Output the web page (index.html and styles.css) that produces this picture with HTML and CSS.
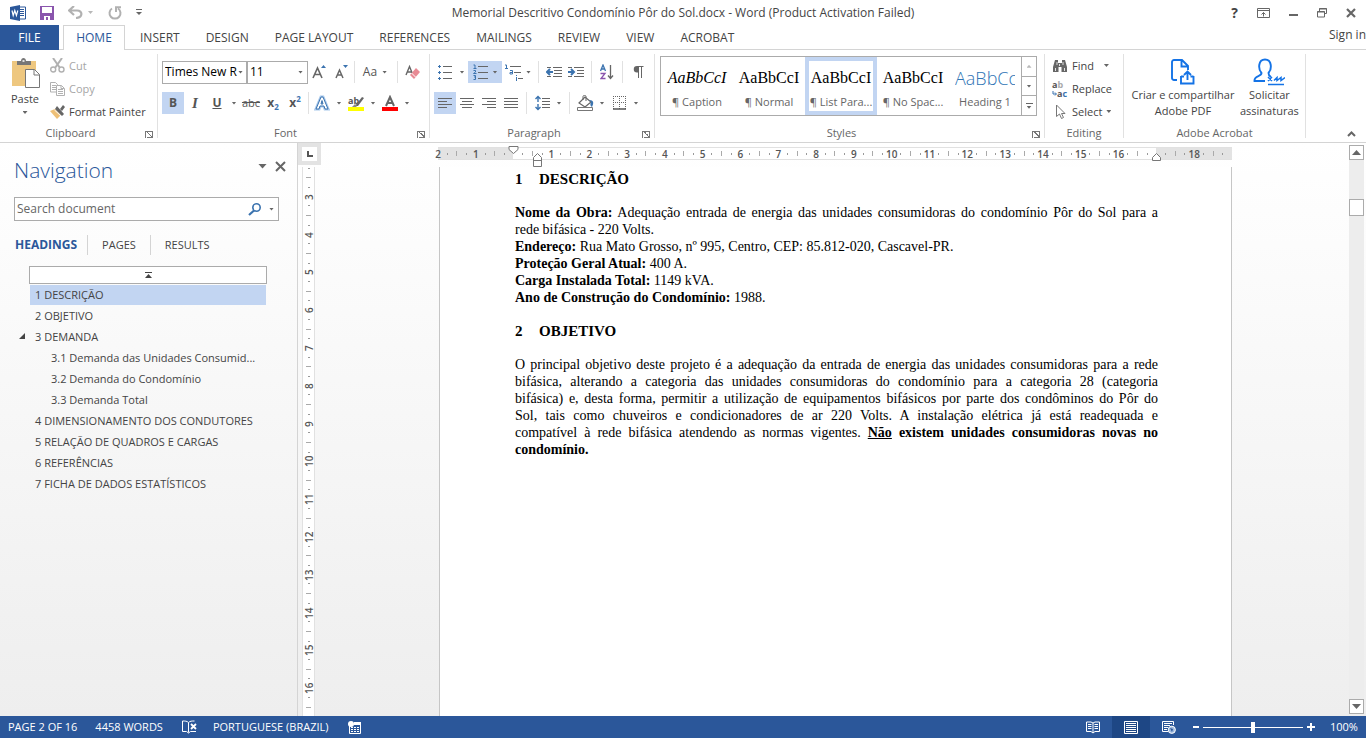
FILE: index.html
```html
<!DOCTYPE html>
<html lang="en">
<head>
<meta charset="utf-8">
<title>Memorial Descritivo Condomínio Pôr do Sol.docx - Word</title>
<link rel="stylesheet" href="styles.css">
</head>
<body>
<header class="titlebar">
  <div class="quick">
    <svg class="ico" width="16" height="16" viewBox="0 0 16 16"><path d="M9 2h6.500v12H9z" fill="#fff" stroke="#2b579a"/><path d="M10 4.500h4M10 6.500h4M10 8.500h4M10 10.500h4" stroke="#2b579a"/><path d="M0 2l10-2v16L0 14z" fill="#2b579a"/><path d="M2 5.500l1.200 5 1.600-5 1.600 5 1.400-5" fill="none" stroke="#fff" stroke-width="1.200"/></svg>
    <button aria-label="Save"><svg width="14" height="14" viewBox="0 0 14 14"><path d="M0 0h14v14H0z" fill="#8a55ad"/><path d="M2 1h10v6H2zM4 10h6v4H8v-3H6v3H4z" fill="#fff"/></svg></button>
    <button aria-label="Undo" class="undo"><svg width="15" height="13" viewBox="0 0 15 13"><path d="M6 0L1 4.500l5 4.500M1.500 4.500H9c6 0 6 7-1 7.500" fill="none" stroke="#b1b1b1" stroke-width="2.200"/></svg><i class="caret pale"></i></button>
    <button aria-label="Repeat" class="redo"><svg width="14" height="14" viewBox="0 0 14 14"><path d="M4 2.500A5.500 5.500 0 1 0 10 2.500M8 6V1.200h5" fill="none" stroke="#b1b1b1" stroke-width="2"/></svg></button>
    <button aria-label="Customize toolbar"><svg width="6" height="7" viewBox="0 0 6 7"><path d="M0 .5h6" stroke="#666"/><path d="M0 3h6L3 6z" fill="#666"/></svg></button>
  </div>
  <h1 class="title">Memorial Descritivo Condomínio Pôr do Sol.docx - Word (Product Activation Failed)</h1>
  <div class="winctl">
    <button aria-label="Help" class="help">?</button>
    <button aria-label="Ribbon options"><svg width="13" height="10" viewBox="0 0 13 10"><path d="M.5.500h12v9H.5zM.5 2.500h12M6.500 8.500V4.500M4.500 6.500l2-2 2 2" fill="none" stroke="#666"/></svg></button>
    <button aria-label="Minimize"><svg width="9" height="10" viewBox="0 0 9 10"><path d="M0 7h9" stroke="#666" stroke-width="2"/></svg></button>
    <button aria-label="Restore"><svg width="10" height="10" viewBox="0 0 10 10"><path d="M2.500 3V.5h7v5H7.500M2 1h8M.5 3.500h7v5.500H.5zM0 4h8" fill="none" stroke="#666"/></svg></button>
    <button aria-label="Close"><svg width="10" height="10" viewBox="0 0 10 10"><path d="M1 1l8 8M9 1l-8 8" stroke="#666" stroke-width="2.200"/></svg></button>
  </div>
</header>

<nav class="tabs">
  <button class="tab file">FILE</button>
  <button class="tab active">HOME</button>
  <button class="tab">INSERT</button>
  <button class="tab">DESIGN</button>
  <button class="tab">PAGE LAYOUT</button>
  <button class="tab">REFERENCES</button>
  <button class="tab">MAILINGS</button>
  <button class="tab">REVIEW</button>
  <button class="tab">VIEW</button>
  <button class="tab">ACROBAT</button>
  <a class="signin" href="#">Sign in</a>
</nav>

<section class="ribbon">
  <div class="group clipboard">
    <div class="body">
      <button class="big paste">
        <svg width="29" height="30" viewBox="0 0 29 30"><path d="M1 3h24v25H1z" fill="#eec77f"/><path d="M6 7V3h4c0-4 5-4 5 0h5v4z" fill="#777"/><path d="M11.500 3h2" stroke="#fff" stroke-width="1.500"/><path d="M14.500 11.500h9l5 5v13h-14z" fill="#fff" stroke="#777"/><path d="M23 11.500V17h5.500" fill="none" stroke="#777"/></svg>
        <span>Paste</span><i class="caret"></i></button>
      <div class="stack">
        <button class="line off"><svg width="15" height="15" viewBox="0 0 15 15"><path d="M3 0l7 10M12 0L5 10" stroke="#b1b1b1" stroke-width="2"/><circle cx="3.200" cy="11.500" r="2.500" fill="none" stroke="#b1b1b1" stroke-width="1.400"/><circle cx="11.500" cy="11.500" r="2.500" fill="none" stroke="#b1b1b1" stroke-width="1.400"/></svg>Cut</button>
        <button class="line off"><svg width="15" height="14" viewBox="0 0 15 14"><path d="M.5.500h5l2 2V10h-7z" fill="#fff" stroke="#b1b1b1"/><path d="M2 3.500h4M2 5.500h4M2 7.500h4" stroke="#b1b1b1"/><path d="M6.500 3.500h5l3 3v7h-8z" fill="#fff" stroke="#b1b1b1"/><path d="M8 7.500h5M8 9.500h5M8 11.500h5M11 3.500V6.500h3" stroke="#b1b1b1" fill="none"/></svg>Copy</button>
        <button class="line"><svg width="15" height="14" viewBox="0 0 15 14"><path d="M0 6l5-2 6 6-4 4z" fill="#eec077"/><path d="M5 4l2-3 7 8-2 2zM10 4l3-4 2 2-3 4z" fill="#666"/><path d="M4.500 5l6.500 6" stroke="#fff"/></svg>Format Painter</button>
      </div>
    </div>
    <div class="label"><span>Clipboard</span><button class="launch" aria-label="Clipboard options"></button></div>
  </div>

  <div class="group font">
    <div class="body rows">
      <div class="row">
        <label class="combo name"><input aria-label="Font" value="Times New R"><i class="caret"></i></label>
        <label class="combo size"><input aria-label="Font size" value="11"><i class="caret"></i></label>
        <button class="tool" aria-label="Grow font"><svg width="16" height="16" viewBox="0 0 16 16"><path d="M2 14L6.500 4 11 14M3.500 10.500h6" fill="none" stroke="#666" stroke-width="1.600"/><path d="M10 4l2.500-3L15 4z" fill="#3b73af"/></svg></button>
        <button class="tool" aria-label="Shrink font"><svg width="16" height="16" viewBox="0 0 16 16"><path d="M3 14L6.500 6 10 14M4 11h5" fill="none" stroke="#666" stroke-width="1.500"/><path d="M10 1h5l-2.500 3z" fill="#3b73af"/></svg></button>
        <i class="sep tight"></i>
        <button class="tool wide">Aa<i class="caret"></i></button>
        <i class="sep"></i>
        <button class="tool" aria-label="Clear formatting"><svg width="16" height="16" viewBox="0 0 16 16"><path d="M1 11L4.500 2.500 8 11M2 8h5" fill="none" stroke="#666" stroke-width="1.400"/><path d="M5 11l6-7 4 4-6 7z" fill="#e88a94"/><path d="M6.500 9l4 4" stroke="#fff"/></svg></button>
      </div>
      <div class="row">
        <button class="tool on"><b>B</b></button>
        <button class="tool serif"><em>I</em></button>
        <button class="tool"><u>U</u></button>
        <button class="drop" aria-label="Underline style"><i class="caret"></i></button>
        <button class="tool"><s>abc</s></button>
        <button class="tool"><b>x</b><sub>2</sub></button>
        <button class="tool"><b>x</b><sup>2</sup></button>
        <i class="sep tight"></i>
        <button class="tool" aria-label="Text effects"><svg width="16" height="16" viewBox="0 0 16 16"><path d="M2 14L7 2h2l5 12h-3l-1-3H6l-1 3zM7 9h2L8 5.500z" fill="#fff" stroke="#a9c9ec" stroke-width="3"/><path d="M2 14L7 2h2l5 12h-3l-1-3H6l-1 3zM7 9h2L8 5.500z" fill="#fff" stroke="#3b73af"/></svg></button>
        <button class="drop" aria-label="Effects list"><i class="caret"></i></button>
        <button class="tool" aria-label="Highlight"><svg width="18" height="17" viewBox="0 0 18 17"><text x="1" y="9" class="ab">ab</text><path d="M8 11l7-9 2 1-6 8z" fill="#666"/><path d="M5 12l3-3 2 2-2 2H4z" fill="#888"/><path d="M1 12h16v4H1z" fill="#ff0"/></svg></button>
        <button class="drop" aria-label="Highlight colors"><i class="caret"></i></button>
        <button class="tool" aria-label="Font color"><svg width="16" height="16" viewBox="0 0 16 16"><path d="M4 11L8 2l4 9M5.500 8h5" fill="none" stroke="#666" stroke-width="2"/><path d="M0 12h16v4H0z" fill="#f00"/></svg></button>
        <button class="drop" aria-label="Font colors"><i class="caret"></i></button>
      </div>
    </div>
    <div class="label"><span>Font</span><button class="launch" aria-label="Font options"></button></div>
  </div>

  <div class="group paragraph">
    <div class="body rows">
      <div class="row">
        <button class="tool" aria-label="Bullets"><svg width="14" height="16" viewBox="0 0 14 16"><path d="M5 2.500h9M5 8.500h9M5 14.500h9" stroke="#666"/><path d="M0 2h1V1h1v1h1v1H2v1H1V3H0zM0 8h1V7h1v1h1v1H2v1H1V9H0zM0 14h1v-1h1v1h1v1H2v1H1v-1H0z" fill="#3b73af"/></svg></button>
        <button class="drop" aria-label="Bullet library"><i class="caret"></i></button>
        <button class="tool on num" aria-label="Numbering"><svg width="15" height="16" viewBox="0 0 15 16"><path d="M5 2.500h10M5 8.500h10M5 14.500h10" stroke="#666"/><path d="M.5 1H2v3.500M.5 4.500h3M.5 6.500h2v1.500l-2 1.500h3M.5 11.500h2V13H1.500h1v2.500h-2" fill="none" stroke="#3b73af"/></svg><i class="caret"></i></button>
        <button class="tool multi" aria-label="Multilevel list"><svg width="18" height="17" viewBox="0 0 18 17"><path d="M5 2.500h11M9 8.500h7M13 14.500h5" stroke="#666"/><path d="M0 1h1.500v4M0 4.500h3M5 6.500h2.500V10H5V8.500h2.500M11.500 13v4M11.500 11v1" fill="none" stroke="#3b73af"/></svg><i class="caret"></i></button>
        <i class="sep"></i>
        <button class="tool" aria-label="Decrease indent"><svg width="16" height="12" viewBox="0 0 16 12"><path d="M1 1.500h4M7 1.500h9M8 4.500h8M8 7.500h8M1 10.500h4M7 10.500h9" stroke="#666"/><path d="M7 6H1M4 3L1 6l3 3" stroke="#3b73af" stroke-width="2" fill="none"/></svg></button>
        <button class="tool" aria-label="Increase indent"><svg width="16" height="12" viewBox="0 0 16 12"><path d="M0 1.500h4M6 1.500h10M9 4.500h7M9 7.500h7M0 10.500h4M6 10.500h10" stroke="#666"/><path d="M0 6h6M3 3l3 3-3 3" stroke="#3b73af" stroke-width="2" fill="none"/></svg></button>
        <i class="sep"></i>
        <button class="tool" aria-label="Sort"><svg width="14" height="16" viewBox="0 0 14 16"><path d="M.5 7L3 1l2.500 6M1.500 5h3" fill="none" stroke="#3b73af" stroke-width="1.300"/><path d="M.5 9.500h4.500L1 14.500h4.500" fill="none" stroke="#8a55ad" stroke-width="1.300"/><path d="M10.500 1v13M8 11.500l2.500 3 2.500-3" fill="none" stroke="#666" stroke-width="1.300"/></svg></button>
        <i class="sep"></i>
        <button class="tool" aria-label="Show marks"><svg width="11" height="14" viewBox="0 0 11 14"><path d="M5.500 1H4a3.200 3.200 0 0 0 0 6.500h1.500z" fill="#666"/><path d="M5.500 13V1.500M8.500 13V1.500M4 1.500h6.500" stroke="#666" fill="none"/></svg></button>
      </div>
      <div class="row">
        <button class="tool on" aria-label="Align left"><svg width="14" height="12" viewBox="0 0 14 12"><path d="M0 1.500h14M0 4.500h9M0 7.500h14M0 10.500h9" stroke="#666"/></svg></button>
        <button class="tool" aria-label="Center"><svg width="14" height="12" viewBox="0 0 14 12"><path d="M0 1.500h14M2 4.500h10M0 7.500h14M2 10.500h10" stroke="#666"/></svg></button>
        <button class="tool" aria-label="Align right"><svg width="14" height="12" viewBox="0 0 14 12"><path d="M0 1.500h14M5 4.500h9M0 7.500h14M5 10.500h9" stroke="#666"/></svg></button>
        <button class="tool" aria-label="Justify"><svg width="14" height="12" viewBox="0 0 14 12"><path d="M0 1.500h14M0 4.500h14M0 7.500h14M0 10.500h14" stroke="#666"/></svg></button>
        <i class="sep"></i>
        <button class="tool" aria-label="Line spacing"><svg width="15" height="16" viewBox="0 0 15 16"><path d="M7 3.500h8M7 6.500h8M7 9.500h8M7 12.500h8" stroke="#666"/><path d="M3 1v6M3 9v6M.5 4L3 1.500 5.500 4M.5 12L3 14.500 5.500 12" fill="none" stroke="#3b73af" stroke-width="1.400"/></svg></button>
        <button class="drop" aria-label="Spacing list"><i class="caret"></i></button>
        <i class="sep"></i>
        <button class="tool" aria-label="Shading"><svg width="17" height="16" viewBox="0 0 17 16"><path d="M2 8l6-6 6 5-6 5z" fill="#fff" stroke="#666" stroke-width="1.200"/><path d="M6 5V1.500C6 0 9 0 9 1.500V6" fill="none" stroke="#666"/><path d="M12 5c5 0 5 3 3 7-2-1-2-3-1-5z" fill="#3b73af"/><path d="M.5 12.500h15v3H.5z" fill="#fff" stroke="#777"/></svg></button>
        <button class="drop" aria-label="Shading colors"><i class="caret"></i></button>
        <button class="tool" aria-label="Borders"><svg width="13" height="14" viewBox="0 0 13 14"><path d="M.5 0v13M6.500 0v13M12.500 0v13M0 .5h13M0 6.500h13" stroke="#666" stroke-dasharray="1 1"/><path d="M0 13h13" stroke="#555" stroke-width="1.500"/></svg></button>
        <button class="drop" aria-label="Border list"><i class="caret"></i></button>
      </div>
    </div>
    <div class="label"><span>Paragraph</span><button class="launch" aria-label="Paragraph options"></button></div>
  </div>

  <div class="group styles">
    <div class="body">
      <div class="gallery">
        <button class="style"><span class="sample ital">AaBbCcI</span><span>¶ Caption</span></button>
        <button class="style"><span class="sample">AaBbCcI</span><span>¶ Normal</span></button>
        <button class="style chosen"><span class="sample">AaBbCcI</span><span>¶ List Para...</span></button>
        <button class="style"><span class="sample">AaBbCcI</span><span>¶ No Spac...</span></button>
        <button class="style"><span class="sample head">AaBbCc</span><span>Heading 1</span></button>
        <div class="spin">
          <button aria-label="Previous row"><i class="caret up pale"></i></button>
          <button aria-label="Next row"><i class="caret"></i></button>
          <button aria-label="More styles" class="more"><i class="caret"></i></button>
        </div>
      </div>
    </div>
    <div class="label"><span>Styles</span><button class="launch" aria-label="Styles options"></button></div>
  </div>

  <div class="group editing">
    <div class="body">
      <div class="stack">
        <button class="line"><svg width="16" height="14" viewBox="0 0 16 14"><path d="M3 1h3v3h4V1h3l2 7v5H9.500V8h-3v5H1V8z" fill="#666"/><path d="M3.500 9v3M12.500 9v3M5 3v3M11 3v3M7.500 5v2" stroke="#fff" stroke-width=".8"/></svg>Find<i class="caret far"></i></button>
        <button class="line"><svg class="swap" width="16" height="18" viewBox="0 0 16 18"><text x="0" y="8" class="ab">a<tspan class="lite">b</tspan></text><text x="5" y="17" class="ab">a<tspan class="blue">c</tspan></text><path d="M1 11v3h3M3 12.500l1.500 1.500L3 15.500" fill="none" stroke="#3b73af"/></svg>Replace</button>
        <button class="line"><svg width="16" height="16" viewBox="0 0 16 16"><path d="M4.500 1v11.500l3-2.500 2 4.500 2-1-2-4h3.500z" fill="#fff" stroke="#777"/></svg>Select<i class="caret"></i></button>
      </div>
    </div>
    <div class="label"><span>Editing</span></div>
  </div>

  <div class="group acrobat">
    <div class="body">
      <button class="big share"><svg width="24" height="26" viewBox="0 0 24 26"><path d="M6 21H3a2 2 0 0 1-2-2V3a2 2 0 0 1 2-2h8l6 6v4M10.500 1v6.500H17M10 17v7.500h12.500V17M16.500 21v-8M13 16l3.500-3.500L20 16M10 17.500h3M19.500 17.500h3" fill="none" stroke="#1473e6" stroke-width="1.900"/></svg><span>Criar e compartilhar<br>Adobe PDF</span></button>
      <button class="big"><svg width="32" height="28" viewBox="0 0 32 28"><path d="M12 23H1.500c-.5-6 7-4 7-8C5 11 5 1.500 12 1.500S19 11 15.500 15c0 2.500 1 3 2.500 4" fill="none" stroke="#1473e6" stroke-width="1.900"/><path d="M15 19l4 4M19 19l-4 4M21 22.500l3-3v3l4-3v3l4-3M15 26.500h16" fill="none" stroke="#1473e6" stroke-width="1.500"/></svg><span>Solicitar<br>assinaturas</span></button>
    </div>
    <div class="label"><span>Adobe Acrobat</span></div>
  </div>
  <button class="collapse" aria-label="Collapse ribbon"><svg width="9" height="6" viewBox="0 0 9 6"><path d="M1 5l3.500-3.500L8 5" fill="none" stroke="#666" stroke-width="2"/></svg></button>
</section>

<main class="work">
  <aside class="nav">
    <div class="navhead"><h2>Navigation</h2><button aria-label="Pane options"><i class="caret large"></i></button><button aria-label="Close pane"><svg width="11" height="11" viewBox="0 0 11 11"><path d="M1 1l9 9M10 1l-9 9" stroke="#666" stroke-width="2"/></svg></button></div>
    <label class="search"><input placeholder="Search document" aria-label="Search document"><svg width="14" height="13" viewBox="0 0 14 13"><circle cx="8.500" cy="4.500" r="3.700" fill="none" stroke="#3b73af" stroke-width="1.600"/><path d="M6 7.500L1 12" stroke="#3b73af" stroke-width="2.200"/></svg><i class="caret"></i></label>
    <div class="navtabs"><button class="sel">HEADINGS</button><button>PAGES</button><button>RESULTS</button></div>
    <button class="jump" aria-label="Jump to top"><svg width="7" height="6" viewBox="0 0 7 6"><path d="M0 .5h7" stroke="#444"/><path d="M0 6l3.500-4L7 6z" fill="#444"/></svg></button>
    <ul class="tree">
      <li class="sel">1 DESCRIÇÃO</li>
      <li>2 OBJETIVO</li>
      <li class="open">3 DEMANDA</li>
      <li class="sub">3.1 Demanda das Unidades Consumid...</li>
      <li class="sub">3.2 Demanda do Condomínio</li>
      <li class="sub">3.3 Demanda Total</li>
      <li>4 DIMENSIONAMENTO DOS CONDUTORES</li>
      <li>5 RELAÇÃO DE QUADROS E CARGAS</li>
      <li>6 REFERÊNCIAS</li>
      <li>7 FICHA DE DADOS ESTATÍSTICOS</li>
    </ul>
  </aside>
  <div class="side">
    <button class="corner" aria-label="Tab stop"><svg width="6" height="6" viewBox="0 0 6 6"><path d="M1 0v5h5" fill="none" stroke="#555" stroke-width="2"/></svg></button>
    <div class="vruler"><div class="cells" id="vcells"></div></div>
  </div>
  <div class="canvas">
    <div class="hruler"><div class="cells" id="hcells"></div>
      <svg class="mark first" width="11" height="8" viewBox="0 0 11 8"><path d="M1 .5h9v3L5.500 7.500 1 3.500z" fill="#fff" stroke="#777"/></svg>
      <svg class="mark hang" width="9" height="14" viewBox="0 0 9 14"><path d="M.5 13.500v-9l4-4 4 4v9zM.5 7.500h8" fill="#fff" stroke="#777"/></svg>
      <svg class="mark right" width="9" height="8" viewBox="0 0 9 8"><path d="M.5 7.500v-3l4-4 4 4v3z" fill="#fff" stroke="#777"/></svg>
    </div>
    <article class="page">
      <h3><span>1</span>DESCRIÇÃO</h3>
      <div class="para">
        <p class="full"><b>Nome da Obra:</b> Adequação entrada de energia das unidades consumidoras do condomínio Pôr do Sol para a</p>
        <p>rede bifásica - 220 Volts.</p>
        <p><b>Endereço:</b> Rua Mato Grosso, nº 995, Centro, CEP: 85.812-020, Cascavel-PR.</p>
        <p><b>Proteção Geral Atual:</b> 400 A.</p>
        <p><b>Carga Instalada Total:</b> 1149 kVA.</p>
        <p><b>Ano de Construção do Condomínio:</b> 1988.</p>
      </div>
      <h3><span>2</span>OBJETIVO</h3>
      <div class="para">
        <p class="full">O principal objetivo deste projeto é a adequação da entrada de energia das unidades consumidoras para a rede</p>
        <p class="full">bifásica, alterando a categoria das unidades consumidoras do condomínio para a categoria 28 (categoria</p>
        <p class="full">bifásica) e, desta forma, permitir a utilização de equipamentos bifásicos por parte dos condôminos do Pôr do</p>
        <p class="full">Sol, tais como chuveiros e condicionadores de ar 220 Volts. A instalação elétrica já está readequada e</p>
        <p class="full">compatível à rede bifásica atendendo as normas vigentes. <b><u>Não</u> existem unidades consumidoras novas no</b></p>
        <p><b>condomínio.</b></p>
      </div>
    </article>
  </div>
  <div class="scroll"><button aria-label="Scroll up"><i class="caret up large"></i></button><div class="track"><div class="thumb"></div></div><button aria-label="Scroll down"><i class="caret large"></i></button></div>
</main>

<footer class="status">
  <span>PAGE 2 OF 16</span><span class="words">4458 WORDS</span>
  <svg width="15" height="14" viewBox="0 0 15 14"><path d="M6.500 12.500V2.500C5 1 3 1 .5 1v10.500h4l2 1.500 2-1.500h5.500M6.500 2.500C8 1 10 1 12.500 1" fill="none" stroke="#fff"/><path d="M9 4l5 5M14 4L9 9" stroke="#fff" stroke-width="1.800"/></svg>
  <span class="lang">PORTUGUESE (BRAZIL)</span>
  <svg width="13" height="13" viewBox="0 0 13 13"><path d="M1.500 5v7.500h11v-11H6" fill="none" stroke="#fff"/><path d="M6 1h7v3H6z" fill="#fff"/><circle cx="3" cy="3" r="3" fill="#fff"/><path d="M3 6.500h9M3 8.500h9M3 10.500h9" stroke="#fff" stroke-dasharray="2 1"/></svg>
  <div class="views">
    <button aria-label="Read mode"><svg width="14" height="13" viewBox="0 0 14 13"><path d="M.5 1H5l2 1 2-1h4.500v9.500H9l-2 1.500-2-1.500H.5zM7 2v10" fill="none" stroke="#fff"/><path d="M2 3.500h3.500M2 5.500h3.500M2 7.500h3.500M8.500 3.500H12M8.500 5.500H12M8.500 7.500H12" stroke="#fff"/></svg></button>
    <button aria-label="Print layout" class="cur"><svg width="14" height="13" viewBox="0 0 14 13"><path d="M.5.500h13v12H.5zM2 2.500h10M2 4.500h10M2 6.500h10M2 8.500h10M2 10.500h10" fill="none" stroke="#fff"/></svg></button>
    <button aria-label="Web layout"><svg width="14" height="13" viewBox="0 0 14 13"><path d="M6 10.500H.5V.5h11V4M2 2.500h8M2 4.500h6M2 6.500h4M2 8.500h3" fill="none" stroke="#fff"/><circle cx="9.800" cy="8.800" r="3.600" fill="#9fb9dc" stroke="#fff"/><path d="M8 7l3 1-1 3z" fill="#2b579a"/></svg></button>
  </div>
  <button class="zoombtn" aria-label="Zoom out"><svg width="6" height="8" viewBox="0 0 6 8"><path d="M0 4h6" stroke="#fff" stroke-width="2"/></svg></button>
  <input class="zoom" type="range" min="0" max="100" value="50" aria-label="Zoom">
  <button class="zoombtn" aria-label="Zoom in"><svg width="8" height="8" viewBox="0 0 8 8"><path d="M0 4h8M4 0v8" stroke="#fff" stroke-width="2"/></svg></button>
  <span class="pct">100%</span>
</footer>
<script src="ruler.js"></script>
</body>
</html>
```
FILE: styles.css
```css
* { box-sizing: border-box; }
html, body { height: 100%; margin: 0; }
body { display: flex; flex-direction: column; overflow: hidden; font: 12px/16px "Open Sans", "Noto Sans", sans-serif; color: #444; background: #fff; }
button, input { font: inherit; color: inherit; border: 0; padding: 0; background: none; }
button { display: flex; align-items: center; justify-content: center; flex: none; }
h1, h2, h3, p, ul { margin: 0; padding: 0; font-weight: normal; }
svg { flex: none; display: block; }
.caret { display: block; flex: none; width: 5px; height: 3px; background: #666; clip-path: polygon(0 0, 100% 0, 50% 100%); }
.caret.up { clip-path: polygon(0 100%, 100% 100%, 50% 0); }
.caret.pale { background: #b8b8b8; }
.caret.large { width: 9px; height: 5px; }

.titlebar { display: flex; align-items: center; height: 25px; flex: none; position: relative; }
.quick { display: flex; align-items: center; padding-left: 10px; gap: 14px; height: 22px; }
.undo { gap: 5px; }
.redo { margin-left: 1px; }
.title { position: absolute; left: 0; right: 0; text-align: center; font-size: 12px; line-height: 25px; pointer-events: none; }
.winctl { display: flex; align-items: center; margin-left: auto; padding-right: 10px; gap: 19px; height: 22px; }
.help { font-size: 14px; font-weight: bold; }

.tabs { display: flex; height: 25px; flex: none; border-bottom: 1px solid #d4d4d4; }
.tab { height: 25px; padding: 0 13px; }
.tab.file { width: 59px; padding: 0; margin-right: 4px; background: #2b579a; color: #fff; }
.tab.active { width: 62px; padding: 0; margin-right: 2px; color: #2b579a; background: #fff; border: 1px solid #d4d4d4; border-bottom: 0; }
.signin { margin-left: auto; color: #444; text-decoration: none; line-height: 20px; }

.ribbon { display: flex; height: 93px; flex: none; border-bottom: 1px solid #d4d4d4; padding-top: 4px; position: relative; font-size: 11px; }
.group { display: flex; flex-direction: column; flex: none; height: 84px; border-right: 1px solid #e1e1e1; }
.group .body { display: flex; flex: 1; }
.label { display: flex; justify-content: center; align-items: center; height: 10px; line-height: 10px; color: #666; position: relative; }
.launch { position: absolute; right: 4px; bottom: 0; width: 8px; height: 7px; border: solid #777; border-width: 1px 0 0 1px; }
.launch::after { content: ""; position: absolute; right: 0; bottom: 0; width: 5px; height: 5px; border: solid #777; border-width: 0 1px 1px 0; background: linear-gradient(45deg, transparent 45%, #777 45%, #777 60%, transparent 60%); }
.clipboard { width: 158px; }
.font { width: 272px; }
.paragraph { width: 225px; }
.styles { width: 390px; }
.editing { width: 79px; }
.acrobat { width: 182px; }
.clipboard .label, .font .label, .paragraph .label, .styles .label { padding-right: 16px; }

.big { flex-direction: column; justify-content: flex-start; text-align: center; padding-top: 4px; gap: 1px; }
.paste { width: 50px; gap: 3px; }
.paste .caret { margin-top: 1px; }
.stack { display: flex; flex-direction: column; }
.line { height: 23px; gap: 4px; justify-content: flex-start; }
.line.off { color: #a6a6a6; }
.far { margin-left: 6px; }
.editing .body { padding-left: 7px; }

.rows { flex-direction: column; padding: 7px 0 0 4px; gap: 9px; }
.row { display: flex; align-items: center; height: 22px; }
.tool { width: 22px; height: 22px; color: #555; }
.drop { width: 12px; height: 22px; }
.on { background: #c2d5f2; }
.sep { width: 1px; height: 22px; margin: 0 4px; background: #e1e1e1; flex: none; }
.sep.tight { margin: 0 2px; }
.combo { display: flex; align-items: center; height: 23px; border: 1px solid #ababab; background: #fff; padding: 0 4px 0 2px; color: #000; flex: none; font-size: 12px; }
.combo input { min-width: 0; flex: 1; width: 0; outline: 0; }
.name { width: 85px; padding-right: 3px; }
.size { width: 61px; }
.wide { width: 36px; gap: 5px; font-size: 12px; }
.num { width: 34px; gap: 5px; }
.multi { width: 32px; gap: 3px; }
.serif { font-family: "Liberation Serif", serif; font-size: 15px; font-weight: bold; }
.tool b { font-size: 12px; }
.tool u { font-size: 12px; font-weight: bold; }
sub, sup { font-size: 8px; line-height: 8px; color: #3b73af; font-weight: bold; }
sub { align-self: flex-end; margin-bottom: 3px; }
sup { align-self: flex-start; margin-top: 3px; }
.ab { font: bold 9px "Open Sans", sans-serif; fill: #555; }
.lite { fill: #aaa; }
.blue { fill: #3b73af; }
.swap { overflow: visible; }

.styles .body { padding: 2px 0 0 5px; align-items: flex-start; }
.gallery { display: flex; height: 60px; border: 1px solid #ababab; }
.style { width: 72px; height: 58px; flex-direction: column; gap: 4px; overflow: hidden; border: 4px solid transparent; border-top-width: 5px; padding-top: 3px; color: #666; white-space: nowrap; }
.style.chosen { border: 4px solid #c2d5f2; padding-top: 4px; }
.sample { font: 16px/24px "Liberation Serif", serif; color: #000; }
.ital { font-style: italic; }
.head { font: 300 18px/24px "Open Sans", sans-serif; color: #2e74b5; width: 60px; overflow: hidden; }
.spin { display: flex; flex-direction: column; width: 15px; border-left: 1px solid #ababab; }
.spin button { flex: 1; flex-direction: column; gap: 2px; }
.spin button + button { border-top: 1px solid #ababab; }
.more::before { content: ""; width: 7px; height: 1px; background: #666; }
.acrobat .body { padding-left: 6px; gap: 4px; }
.acrobat .big svg { height: 28px; }
.share { width: 106px; }
.collapse { position: absolute; right: 10px; bottom: 5px; }

.work { display: flex; flex: 1; min-height: 0; background: linear-gradient(#fff, #eee); }
.nav { width: 298px; flex: none; border-right: 1px solid #d4d4d4; padding: 0 18px 0 14px; }
.navhead { display: flex; align-items: center; height: 54px; gap: 8px; margin-right: -7px; }
.navhead h2 { flex: 1; font-size: 21px; line-height: 28px; color: #2b579a; font-weight: 300; }
.navhead button { height: 20px; margin-bottom: 8px; }
.search { display: flex; align-items: center; height: 24px; border: 1px solid #ababab; background: #fff; padding: 0 4px 0 2px; gap: 7px; }
.search input { flex: 1; min-width: 0; outline: 0; }
.search input::placeholder { color: #666; opacity: 1; }
.navtabs { display: flex; align-items: center; margin-top: 14px; height: 20px; font-size: 11px; }
.navtabs button { height: 20px; padding: 0 14px; }
.navtabs button + button { border-left: 1px solid #d4d4d4; }
.navtabs .sel { padding: 0 10px 0 1px; font-size: 12px; font-weight: bold; color: #2b579a; }
.jump { width: 238px; height: 18px; margin: 11px 0 1px 15px; border: 1px solid #ababab; background: #fff; }
.tree { list-style: none; margin: 0 13px 0 16px; font-size: 11px; }
.tree li { height: 21px; line-height: 20px; padding-left: 5px; white-space: nowrap; position: relative; }
.tree .sel { background: #c2d5f2 padding-box; border-bottom: 1px solid transparent; }
.tree .sub { padding-left: 21px; }
.open::before { content: ""; position: absolute; left: -11px; top: 6px; width: 6px; height: 6px; background: #444; clip-path: polygon(100% 0, 100% 100%, 0 100%); }

.side { width: 23px; flex: none; display: flex; flex-direction: column; }
.corner { width: 23px; height: 22px; border: 4px solid #e3e3e3; background: #fff; }
.vruler { flex: 1; overflow: hidden; width: 13px; margin: 2px 0 0 4px; border: solid #e1e1e1; border-width: 0 1px; background: #fff; }
.cells { display: grid; font: 600 10px/10px "Open Sans", sans-serif; color: #555; }
.cells div { display: flex; align-items: center; justify-content: space-between; }
.cells span { display: flex; align-items: center; justify-content: center; width: 0; }
.cells i { width: 1px; height: 2px; background: #999; }
.cells i.mid { height: 5px; background: #aaa; }
.vruler .cells { height: 567px; margin-top: -8px; grid-auto-rows: 1fr; }
.vruler .cells div { flex-direction: column; }
.vruler .cells span { height: 0; width: auto; writing-mode: vertical-rl; transform: rotate(180deg); }
.vruler .cells i { width: 2px; height: 1px; }
.vruler .cells i.mid { width: 5px; }

.canvas { flex: 1; min-width: 0; display: flex; flex-direction: column; align-items: center; }
.hruler { width: 794px; height: 13px; margin: 4px 0 7px; flex: none; border: solid #e1e1e1; border-width: 1px 0; background: linear-gradient(90deg, #e3e3e3 0 75px, #fff 75px 718px, #e3e3e3 718px); position: relative; }
.hruler .cells { height: 11px; grid-auto-flow: column; grid-auto-columns: 1fr; }
.mark { position: absolute; }
.first { left: 70px; top: -2px; }
.hang { left: 95px; top: 5px; }
.right { right: 71px; top: 5px; }
.page { width: 793px; margin-left: 1px; flex: 1; overflow: hidden; background: #fff; border: solid #c6c6c6; border-width: 0 1px; padding: 4px 73px 0 75px; font: 14px/17px "Liberation Serif", serif; color: #000; }
.page h3 { font-size: 15px; font-weight: bold; display: flex; }
.page h3 span { width: 24px; }
.para { margin: 16px 0 17px; }
.para p { white-space: nowrap; }
.para .full { text-align: justify; text-align-last: justify; }

.scroll { width: 17px; flex: none; display: flex; flex-direction: column; padding: 2px 2px 2px 0; }
.scroll button { height: 15px; border: 1px solid #ababab; background: #fff; }
.track { flex: 1; background: #ededed; padding-top: 39px; }
.thumb { height: 17px; border: 1px solid #ababab; background: #fff; }

.status { display: flex; align-items: center; height: 22px; flex: none; background: #2b579a; color: #fff; padding-left: 8px; font-size: 11px; }
.words { margin: 0 19px 0 18px; }
.lang { margin: 0 19px 0 16px; }
.views { display: flex; margin-left: auto; height: 22px; }
.views button { width: 38px; }
.cur { background: #1e4785; }
.zoombtn { width: 10px; height: 22px; }
.views + .zoombtn { margin-left: 3px; }
.zoom { appearance: none; width: 100px; height: 11px; margin: 0 3px 0 2px; background: linear-gradient(#fff, #fff) center / 100% 1px no-repeat; }
.zoom::-webkit-slider-thumb { appearance: none; width: 4px; height: 11px; background: #fff; }
.pct { width: 50px; padding-left: 14px; }
```
FILE: ruler.js
```js
function fill(id, labels) {
  document.getElementById(id).innerHTML = labels
    .map(function (n) {
      return '<div><span>' + n + '</span><i></i><i class="mid"></i><i></i><span></span></div>';
    })
    .join('');
}
fill('hcells', [2, 1, '', 1, 2, 3, 4, 5, 6, 7, 8, 9, 10, 11, 12, 13, 14, 15, 16, '', 18]);
fill('vcells', [2, 3, 4, 5, 6, 7, 8, 9, 10, 11, 12, 13, 14, 15, 16]);
```
